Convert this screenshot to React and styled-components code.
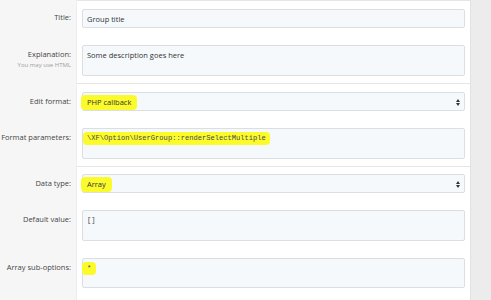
import React from "react"
import styled, { createGlobalStyle } from "styled-components"

const Global = createGlobalStyle`
  html, body {
    margin: 0;
    padding: 0;
    background: #ffffff;
  }
  body {
    font-family: "Open Sans", "Noto Sans", sans-serif;
    color: #3b3b3b;
  }
`

const Page = styled.div`
  display: flex;
  width: 491px;
  height: 300px;
  overflow: hidden;
`
const Form = styled.div`
  width: 470px;
  display: flex;
  flex-direction: column;
`
const Gutter = styled.div`
  flex: 1;
  background: #ececec;
  border-left: 1px solid #e2e2e2;
`
const Row = styled.div`
  display: grid;
  grid-template-columns: 77px 1fr;
`
const Label = styled.div`
  background: #f6f6f6;
  border-right: 1px solid #ededed;
  padding: ${(p) => p.$top || 0}px 5px ${(p) => p.$bottom || 0}px 0;
  text-align: right;
  font-size: 7.5px;
  line-height: 19px;
  color: #454545;
  white-space: nowrap;
`
const Hint = styled.div`
  font-size: 6px;
  line-height: 6px;
  color: #a0a0a0;
  margin-top: -2px;
`
const Field = styled.div`
  padding: ${(p) => p.$top || 0}px 5px ${(p) => p.$bottom || 0}px 5px;
  border-bottom: ${(p) => (p.$divider ? "1px solid #e6e6e6" : "none")};
  border-top: ${(p) => (p.$topline ? "1px solid #e6e6e6" : "none")};
`
const Box = styled.div`
  box-sizing: border-box;
  height: ${(p) => p.$h}px;
  background: #f5f9fc;
  border: 1px solid #dcdfe2;
  border-radius: 2px;
  padding: 0 4px;
  font-size: 7.5px;
  line-height: 18px;
  color: #333;
  display: flex;
  align-items: flex-start;
  justify-content: space-between;
  font-family: ${(p) =>
    p.$mono ? '"Liberation Mono", "DejaVu Sans Mono", monospace' : "inherit"};
  ${(p) => p.$mono && "font-size: 7.1px; color: #4a4a4a;"}
`
const Mark = styled.span`
  background: #fbfb2c;
  border-radius: 4px;
  padding: 2px ${(p) => p.$pad || 5}px 3px;
  margin-left: -${(p) => p.$pad || 5}px;
`
const Arrows = styled.svg`
  margin-top: 6px;
  flex: none;
`

const SelectArrows = () => (
  <Arrows width="4" height="7" viewBox="0 0 4 7">
    <path d="M2 0 L4 3 L0 3 Z M0 4 L4 4 L2 7 Z" fill="#333" />
  </Arrows>
)

const App = () => (
  <Page>
    <Global />
    <Form>
      <Row>
        <Label $top={8}>Title:</Label>
        <Field $top={8} $bottom={17} $topline>
          <Box $h={19}>Group title</Box>
        </Field>
      </Row>
      <Row>
        <Label $bottom={7}>
          Explanation:
          <Hint>You may use HTML</Hint>
        </Label>
        <Field $bottom={7} $divider>
          <Box $h={31}>Some description goes here</Box>
        </Field>
      </Row>
      <Row>
        <Label $top={8}>Edit format:</Label>
        <Field $top={8} $bottom={17}>
          <Box $h={19}>
            <span>
              <Mark $pad={6}>PHP callback</Mark>
            </span>
            <SelectArrows />
          </Box>
        </Field>
      </Row>
      <Row>
        <Label $bottom={7}>Format parameters:</Label>
        <Field $bottom={7} $divider>
          <Box $h={31} $mono>
            <span>
              <Mark $pad={4}>\XF\Option\UserGroup::renderSelectMultiple</Mark>
            </span>
          </Box>
        </Field>
      </Row>
      <Row>
        <Label $top={7}>Data type:</Label>
        <Field $top={7} $bottom={17}>
          <Box $h={19}>
            <span>
              <Mark $pad={6}>Array</Mark>
            </span>
            <SelectArrows />
          </Box>
        </Field>
      </Row>
      <Row>
        <Label $bottom={17}>Default value:</Label>
        <Field $bottom={17}>
          <Box $h={31} $mono>[]</Box>
        </Field>
      </Row>
      <Row>
        <Label $bottom={20}>Array sub-options:</Label>
        <Field $bottom={20}>
          <Box $h={30} $mono>
            <span>
              <Mark $pad={5}>*</Mark>
            </span>
          </Box>
        </Field>
      </Row>
    </Form>
    <Gutter />
  </Page>
)

export default App
